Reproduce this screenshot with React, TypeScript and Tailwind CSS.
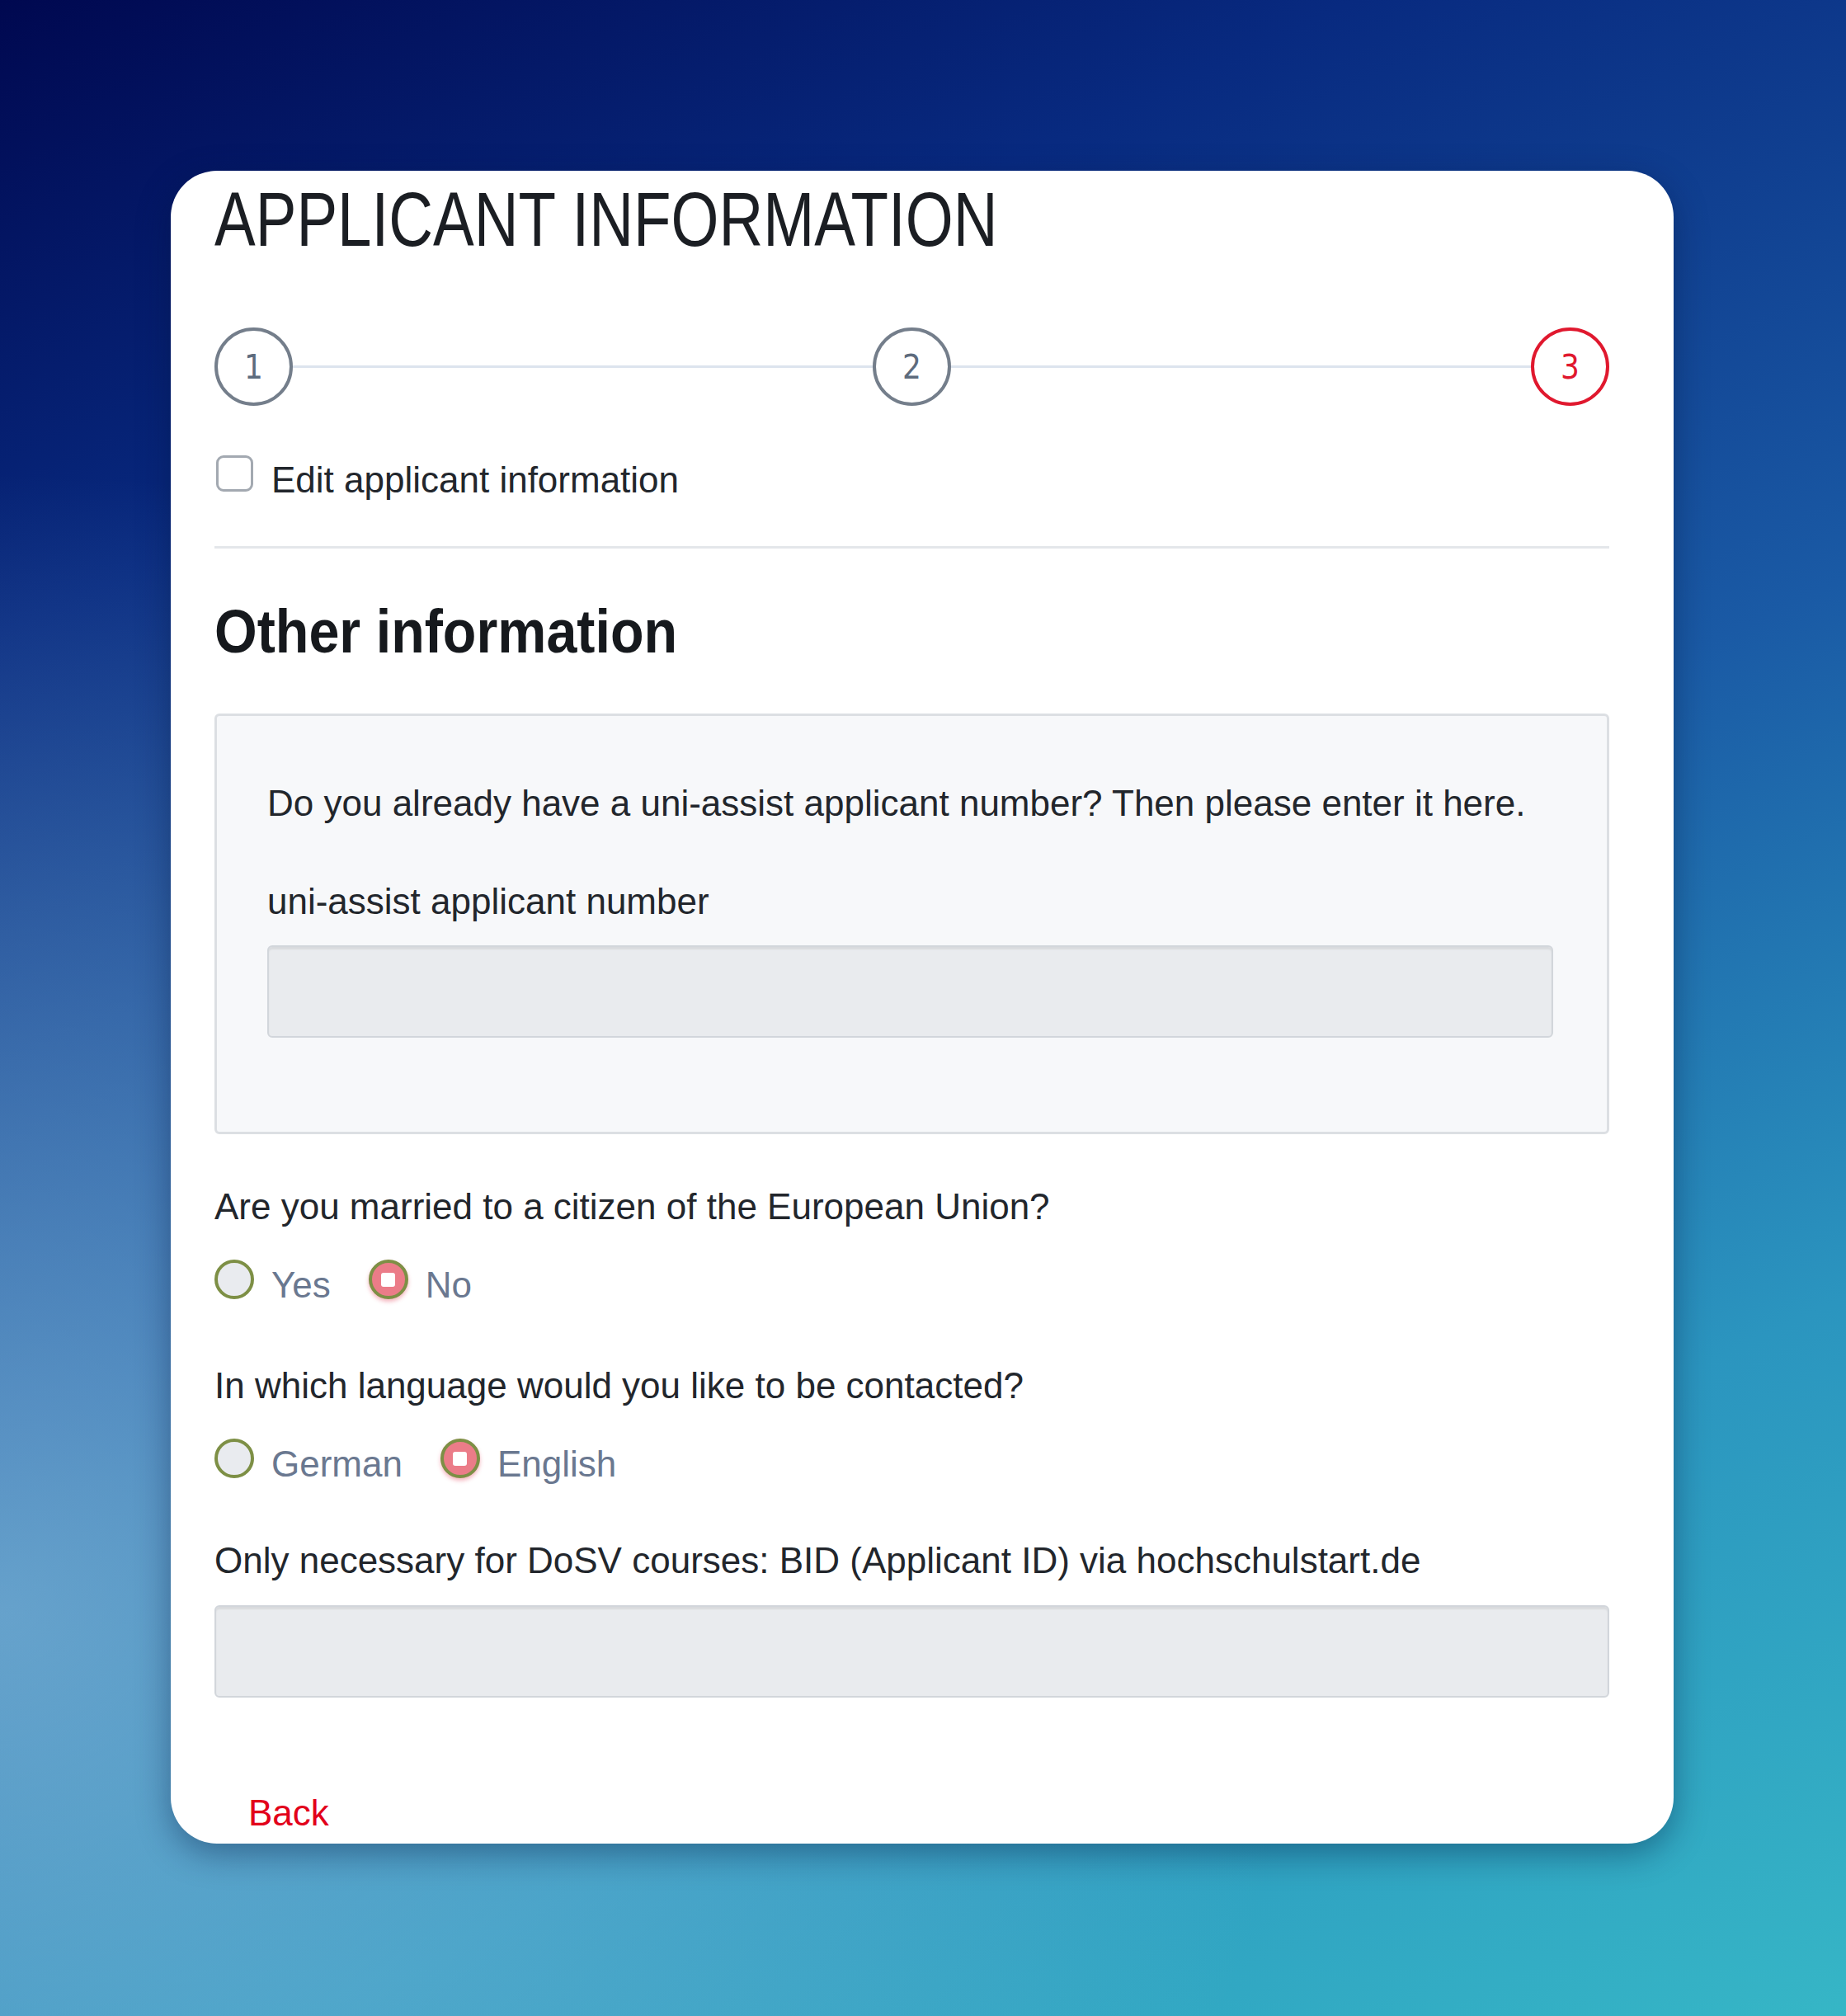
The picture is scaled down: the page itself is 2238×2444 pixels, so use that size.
import React from "react";

const body = "font-['Liberation_Sans',Arial,sans-serif]";
const digits = "font-['DejaVu_Sans_Condensed','DejaVu_Sans',sans-serif]";

function Step({ n, active }: { n: number; active?: boolean }) {
  return (
    <div
      className={
        active
          ? "flex h-[95px] w-[95px] shrink-0 items-center justify-center rounded-full border-[4px] border-[#e0182e] text-[#e0182e]"
          : "flex h-[95px] w-[95px] shrink-0 items-center justify-center rounded-full border-[4px] border-[#747e8b] text-[#5d6b7d]"
      }
    >
      <span className={`${digits} text-[40px] leading-none`}>{n}</span>
    </div>
  );
}

function Radio({ label, checked }: { label: string; checked?: boolean }) {
  return (
    <label className="mr-[46px] flex items-start gap-[21px]">
      {checked ? (
        <span className="flex h-[48px] w-[48px] items-center justify-center rounded-full border-[4px] border-[#7d8f45] bg-[#eb7c88] shadow-[0_3px_5px_rgba(232,90,110,0.45)]">
          <span className="h-[17px] w-[17px] rounded-[3px] bg-white" />
        </span>
      ) : (
        <span className="h-[48px] w-[48px] rounded-full border-[4px] border-[#7d8f45] bg-[#e9ebef]" />
      )}
      <span className="mt-[5px] text-[44px] leading-[52px] text-[#6a7890]">{label}</span>
    </label>
  );
}

function Field({ className }: { className?: string }) {
  return (
    <div
      className={`h-[112px] rounded-[6px] border-[2px] border-[#d2d6db] bg-[#e9ebee] shadow-[inset_0_3px_2px_rgba(0,0,0,0.07)] ${className ?? ""}`}
    />
  );
}

export default function App() {
  return (
    <div
      className={`${body} min-h-[2444px] w-full bg-[radial-gradient(ellipse_at_0%_80%,rgba(150,200,225,0.6),transparent_50%),linear-gradient(155deg,#000850_0%,#082a80_22%,#1a5aa5_50%,#2b95bf_75%,#36b6c6_100%)] pl-[207px] pt-[207px]`}
    >
      <div className="h-[2028px] w-[1822px] overflow-hidden rounded-[56px] bg-white pl-[53px] pr-[78px] pt-[13px] shadow-[0_12px_40px_rgba(0,20,60,0.4)]">
        <h1 className="origin-left scale-x-[0.81] text-[92px] leading-none font-normal whitespace-nowrap text-[#1b1e23]">
          APPLICANT INFORMATION
        </h1>

        <div className="mt-[85px] flex items-center">
          <Step n={1} />
          <div className="h-[3px] flex-1 bg-[#dde4ee]" />
          <Step n={2} />
          <div className="h-[3px] flex-1 bg-[#dde4ee]" />
          <Step n={3} active />
        </div>

        <label className="mt-[60px] flex items-start gap-[22px]">
          <span className="ml-[2px] h-[44px] w-[45px] rounded-[9px] border-[3px] border-[#a3a9b1] bg-white" />
          <span className="mt-[4px] text-[44px] leading-[52px] text-[#22262c]">Edit applicant information</span>
        </label>

        <div className="mt-[54px] h-[3px] bg-[#e4e7ea]" />

        <h2 className="mt-[63px] origin-left scale-x-[0.886] text-[75px] leading-none font-bold whitespace-nowrap text-[#16191d]">
          Other information
        </h2>

        <div className="mt-[62px] rounded-[6px] border-[3px] border-[#dcdfe3] bg-[#f7f8fa] pb-[114px] pl-[61px] pr-[65px] pt-[80px]">
          <p className="text-[44px] leading-[52px] text-[#22262c]">
            Do you already have a uni-assist applicant number? Then please enter it here.
          </p>
          <p className="mt-[67px] text-[44px] leading-[52px] text-[#22262c]">uni-assist applicant number</p>
          <Field className="mt-[27px]" />
        </div>

        <p className="mt-[62px] text-[44px] leading-[52px] text-[#22262c]">
          Are you married to a citizen of the European Union?
        </p>
        <div className="mt-[38px] flex">
          <Radio label="Yes" />
          <Radio label="No" checked />
        </div>

        <p className="mt-[70px] text-[44px] leading-[52px] text-[#22262c]">
          In which language would you like to be contacted?
        </p>
        <div className="mt-[38px] flex">
          <Radio label="German" />
          <Radio label="English" checked />
        </div>

        <p className="mt-[65px] text-[44px] leading-[52px] text-[#22262c]">
          Only necessary for DoSV courses: BID (Applicant ID) via hochschulstart.de
        </p>
        <Field className="mt-[28px] h-[110px]" />

        <button className="ml-[41px] mt-[114px] text-[44px] leading-[52px] text-[#e2001a]">Back</button>
      </div>
    </div>
  );
}
